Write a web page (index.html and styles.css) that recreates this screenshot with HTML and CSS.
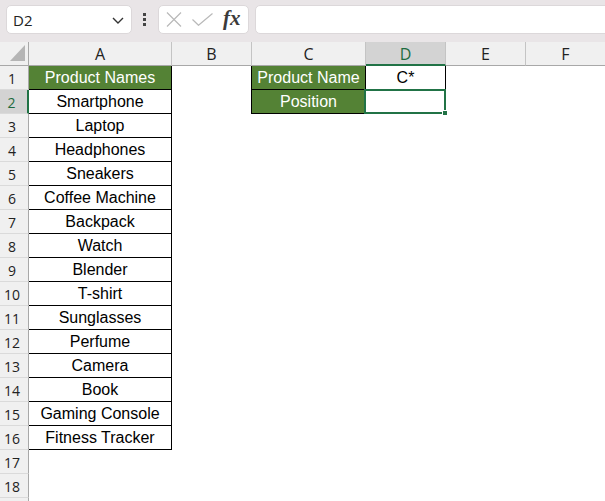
FILE: index.html
```html
<!DOCTYPE html>
<html>
<head>
<meta charset="utf-8">
<link rel="stylesheet" href="styles.css">
</head>
<body>
<div class="app">
  <div class="bar">
    <div class="namebox">
      <span class="ref">D2</span>
      <svg class="chev" width="12" height="7" viewBox="0 0 12 7"><path d="M1 1 L6 6 L11 1" fill="none" stroke="#333" stroke-width="1.4"/></svg>
    </div>
    <div class="dots"><i></i><i></i><i></i></div>
    <div class="fxbox">
      <svg width="16" height="15" viewBox="0 0 16 15"><path d="M1 0.5 L15 14.5 M15 0.5 L1 14.5" stroke="#b9b9b9" stroke-width="1.2" fill="none"/></svg>
      <svg width="21" height="13" viewBox="0 0 21 13"><path d="M0.5 6.5 L6.5 12.3 L20.5 0.5" stroke="#b9b9b9" stroke-width="1.2" fill="none"/></svg>
      <span class="fx">fx</span>
    </div>
    <div class="formula"></div>
  </div>
  <div class="sheet">
    <div class="corner"><span class="tri"></span></div>
    <div class="ch">A</div><div class="ch">B</div><div class="ch">C</div><div class="ch sel">D</div><div class="ch">E</div><div class="ch">F</div>

    <div class="rh">1</div><div class="c b g">Product Names</div><div class="c br"></div><div class="c b g">Product Name</div><div class="c b">C*</div><div class="c"></div><div class="c"></div>
    <div class="rh selr">2</div><div class="c b">Smartphone</div><div class="c br"></div><div class="c b g">Position</div><div class="c b"></div><div class="c"></div><div class="c"></div>
    <div class="rh">3</div><div class="c b">Laptop</div><div class="c"></div><div class="c"></div><div class="c"></div><div class="c"></div><div class="c"></div>
    <div class="rh">4</div><div class="c b">Headphones</div><div class="c"></div><div class="c"></div><div class="c"></div><div class="c"></div><div class="c"></div>
    <div class="rh">5</div><div class="c b">Sneakers</div><div class="c"></div><div class="c"></div><div class="c"></div><div class="c"></div><div class="c"></div>
    <div class="rh">6</div><div class="c b">Coffee Machine</div><div class="c"></div><div class="c"></div><div class="c"></div><div class="c"></div><div class="c"></div>
    <div class="rh">7</div><div class="c b">Backpack</div><div class="c"></div><div class="c"></div><div class="c"></div><div class="c"></div><div class="c"></div>
    <div class="rh">8</div><div class="c b">Watch</div><div class="c"></div><div class="c"></div><div class="c"></div><div class="c"></div><div class="c"></div>
    <div class="rh">9</div><div class="c b">Blender</div><div class="c"></div><div class="c"></div><div class="c"></div><div class="c"></div><div class="c"></div>
    <div class="rh">10</div><div class="c b">T-shirt</div><div class="c"></div><div class="c"></div><div class="c"></div><div class="c"></div><div class="c"></div>
    <div class="rh">11</div><div class="c b">Sunglasses</div><div class="c"></div><div class="c"></div><div class="c"></div><div class="c"></div><div class="c"></div>
    <div class="rh">12</div><div class="c b">Perfume</div><div class="c"></div><div class="c"></div><div class="c"></div><div class="c"></div><div class="c"></div>
    <div class="rh">13</div><div class="c b">Camera</div><div class="c"></div><div class="c"></div><div class="c"></div><div class="c"></div><div class="c"></div>
    <div class="rh">14</div><div class="c b">Book</div><div class="c"></div><div class="c"></div><div class="c"></div><div class="c"></div><div class="c"></div>
    <div class="rh">15</div><div class="c b">Gaming Console</div><div class="c"></div><div class="c"></div><div class="c"></div><div class="c"></div><div class="c"></div>
    <div class="rh">16</div><div class="c b">Fitness Tracker</div><div class="c"></div><div class="c"></div><div class="c"></div><div class="c"></div><div class="c"></div>
    <div class="rh">17</div><div class="c"></div><div class="c"></div><div class="c"></div><div class="c"></div><div class="c"></div><div class="c"></div>
    <div class="rh">18</div><div class="c"></div><div class="c"></div><div class="c"></div><div class="c"></div><div class="c"></div><div class="c"></div>
    <div class="rh"></div><div class="c"></div><div class="c"></div><div class="c"></div><div class="c"></div><div class="c"></div><div class="c"></div>

    <div class="selection"><span class="handle"></span></div>
  </div>
</div>
</body>
</html>
```
FILE: styles.css
```css
* { box-sizing: border-box; }
html, body { margin: 0; padding: 0; background: #fff; overflow: hidden; }
.app { width: 605px; height: 501px; overflow: hidden; font-family: "Open Sans", "Liberation Sans", sans-serif; }

.bar {
  height: 42px;
  background: #e9e5e7;
  display: flex;
  align-items: flex-start;
  padding: 5px 0 0 6px;
}
.namebox {
  width: 126px; height: 29px;
  background: #fff;
  border: 1px solid #dcd8da;
  border-radius: 5px;
  display: flex; align-items: center; justify-content: space-between;
  padding: 0 7px 0 6px;
}
.ref { font-size: 15px; color: #222; }
.chev { margin-top: 1px; }
.dots {
  width: 26px; height: 29px;
  display: flex; flex-direction: column; align-items: center; justify-content: center; gap: 2px;
  padding-right: 1px;
}
.dots i { display: block; width: 3px; height: 3px; background: #444; }
.fxbox {
  width: 91px; height: 29px;
  background: #fff;
  border: 1px solid #dcd8da;
  border-radius: 5px;
  display: flex; align-items: center;
  padding: 0 0 0 7px;
  gap: 10px;
}
.fx {
  font-family: "Liberation Serif", serif;
  font-style: italic;
  font-weight: bold;
  font-size: 21px;
  color: #3b3b3b;
  margin-top: -3px;
}
.formula {
  flex: 1;
  height: 29px;
  margin-left: 6px;
  margin-right: -10px;
  background: #fff;
  border: 1px solid #dcd8da;
  border-radius: 5px;
}

.sheet {
  position: relative;
  display: grid;
  grid-template-columns: 29px 143px 80px 114px 80px 80px 80px;
  grid-auto-rows: 24px;
  width: 606px;
}
.corner {
  background: #f0f0f0;
  border-right: 1px solid #a8a8a8;
  border-bottom: 1px solid #a8a8a8;
  position: relative;
}
.tri {
  position: absolute; left: 10px; top: 3px;
  width: 0; height: 0;
  border-left: 15px solid transparent;
  border-bottom: 16px solid #b5b5b5;
}
.ch {
  background: #f0f0f0;
  border-right: 1px solid #c4c4c4;
  border-bottom: 1px solid #a8a8a8;
  text-align: center;
  font-size: 16px;
  line-height: 23px;
  padding-top: 1px;
  color: #222;
}
.ch.sel {
  background: #d3d3d3;
  color: #1d6b40;
  border-bottom: 2px solid #217346;
}
.rh {
  background: #f0f0f0;
  border-right: 1px solid #a8a8a8;
  border-bottom: 1px solid #dadada;
  text-align: center;
  padding-right: 4px;
  padding-top: 3px;
  font-size: 14px;
  line-height: 20px;
  color: #222;
}
.rh.selr {
  background: #d3d3d3;
  color: #1d6b40;
  border-right: 2px solid #217346;
}
.c {
  font-family: "Liberation Sans", Arial, sans-serif;
  font-size: 16px;
  line-height: 22px;
  padding-top: 1px;
  text-align: center;
  color: #000;
  white-space: nowrap;
}
.c.b { border-right: 1px solid #000; border-bottom: 1px solid #000; }
.c.br { border-right: 1px solid #000; }
.c.g { background: #548235; color: #fff; }

.selection {
  position: absolute;
  left: 364px; top: 47px;
  width: 82px; height: 25px;
  border: 2px solid #217346;
  pointer-events: none;
}
.handle {
  position: absolute;
  right: -4px; bottom: -4px;
  width: 6px; height: 6px;
  background: #217346;
  border: 1px solid #fff;
}
```
